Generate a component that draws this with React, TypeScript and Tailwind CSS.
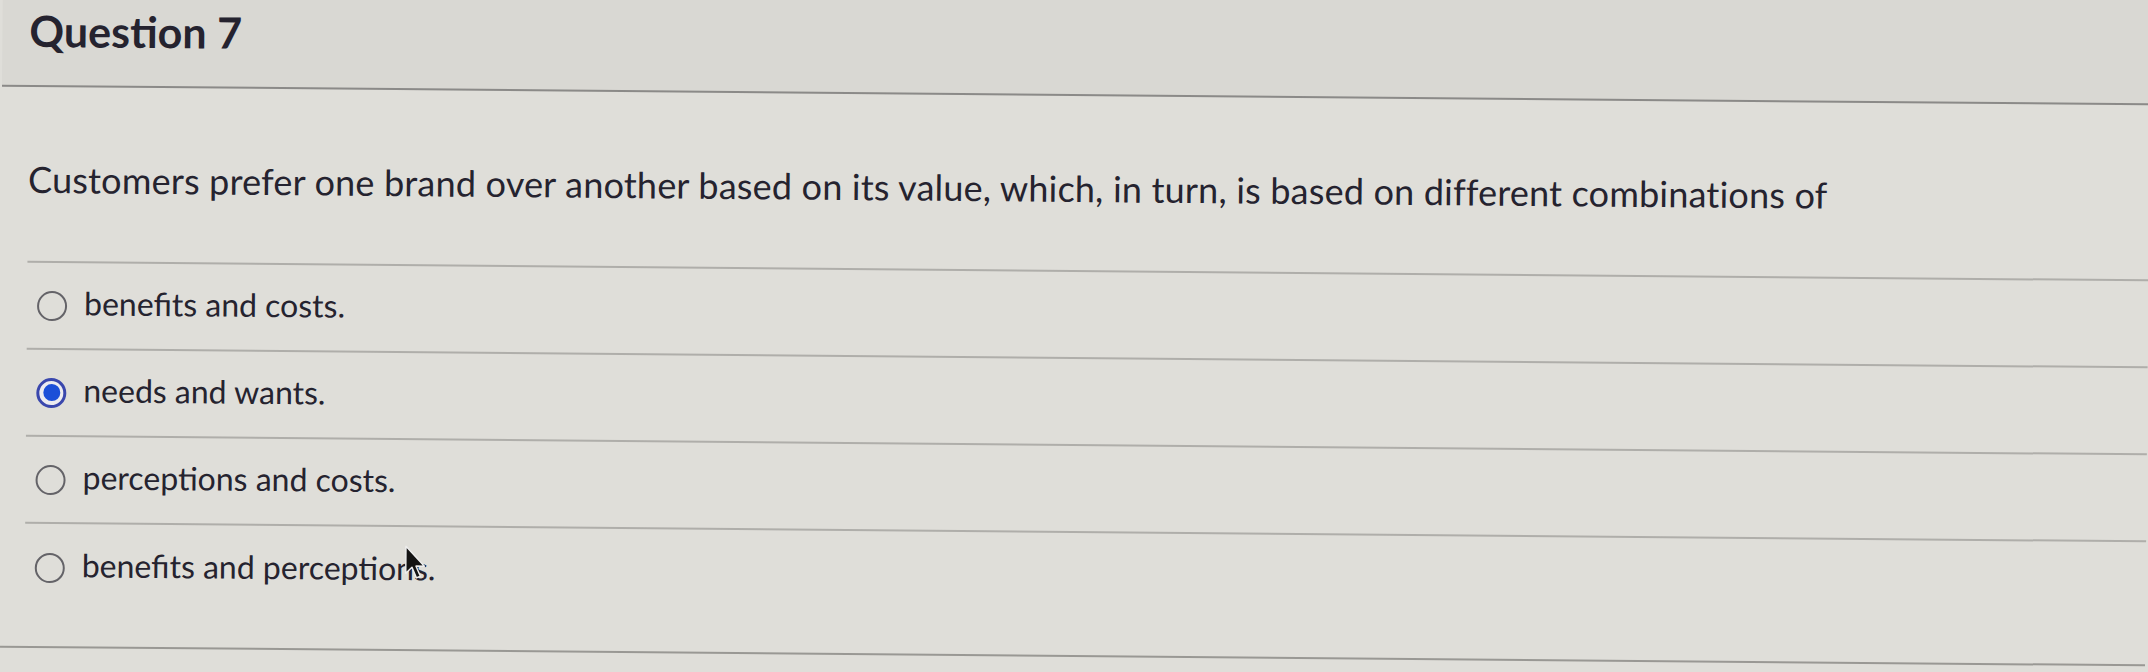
import React from 'react'

const options = [
  { id: 'a', label: 'benefits and costs.', checked: false },
  { id: 'b', label: 'needs and wants.', checked: true },
  { id: 'c', label: 'perceptions and costs.', checked: false },
  { id: 'd', label: 'benefits and perceptions.', checked: false, cursor: true },
]

function Radio({ checked }: { checked: boolean }) {
  if (checked) {
    return (
      <span className="flex h-[30px] w-[30px] shrink-0 items-center justify-center rounded-full border-[3px] border-[#3a47ad] bg-[#ecebf0]">
        <span className="h-[17px] w-[17px] rounded-full bg-[#1c4fd8]" />
      </span>
    )
  }
  return <span className="h-[30px] w-[30px] shrink-0 rounded-full border-[2.5px] border-[#646368]" />
}

function Cursor() {
  return (
    <svg
      className="pointer-events-none absolute left-[7px] top-[-3px]"
      width="24"
      height="36"
      viewBox="0 0 20 32"
    >
      <path
        d="M2 1 L2 25 L7.5 19.5 L11.5 29 L15 27.5 L11 18.5 L18.5 18.5 Z"
        fill="#141414"
        stroke="#ededed"
        strokeWidth="1.3"
        strokeLinejoin="round"
      />
    </svg>
  )
}

function Label({ text, cursor }: { text: string; cursor?: boolean }) {
  if (!cursor) return <span className="pb-[6px]">{text}</span>
  const head = text.slice(0, -3)
  const tail = text.slice(-3, -1)
  return (
    <span className="pb-[6px]">
      {head}
      <span className="relative">
        {tail}
        <Cursor />
      </span>
      .
    </span>
  )
}

export default function App() {
  return (
    <div className="h-[672px] w-full overflow-hidden bg-[#dfded9] font-['Lato','Liberation_Sans',sans-serif] text-[#25232f]">
      <div className="origin-center rotate-[0.5deg]">
        <header className="-mt-[20px] border-b-2 border-[#8b8a88] bg-[#d9d8d3] pl-[27px] pt-[38px] pb-[33px]">
          <h1 className="text-[43px] font-bold leading-none">Question 7</h1>
        </header>

        <section className="pt-[74px]">
          <p className="pl-[27px] pb-[64px] text-[36px] leading-none tracking-[0.2px]">
            Customers prefer one brand over another based on its value, which, in turn, is based on
            different combinations of
          </p>

          <div className="ml-[27px] border-t-2 border-[#afaeaa]">
            {options.map((opt) => (
              <label
                key={opt.id}
                className="flex h-[87px] items-center gap-[17px] border-b-2 border-[#afaeaa] pl-[10px] text-[32px] leading-none last:border-b-0"
              >
                <Radio checked={opt.checked} />
                <Label text={opt.label} cursor={opt.cursor} />
              </label>
            ))}
          </div>

          <div className="mt-[35px] border-t-2 border-[#999894]" />
        </section>
      </div>
    </div>
  )
}
